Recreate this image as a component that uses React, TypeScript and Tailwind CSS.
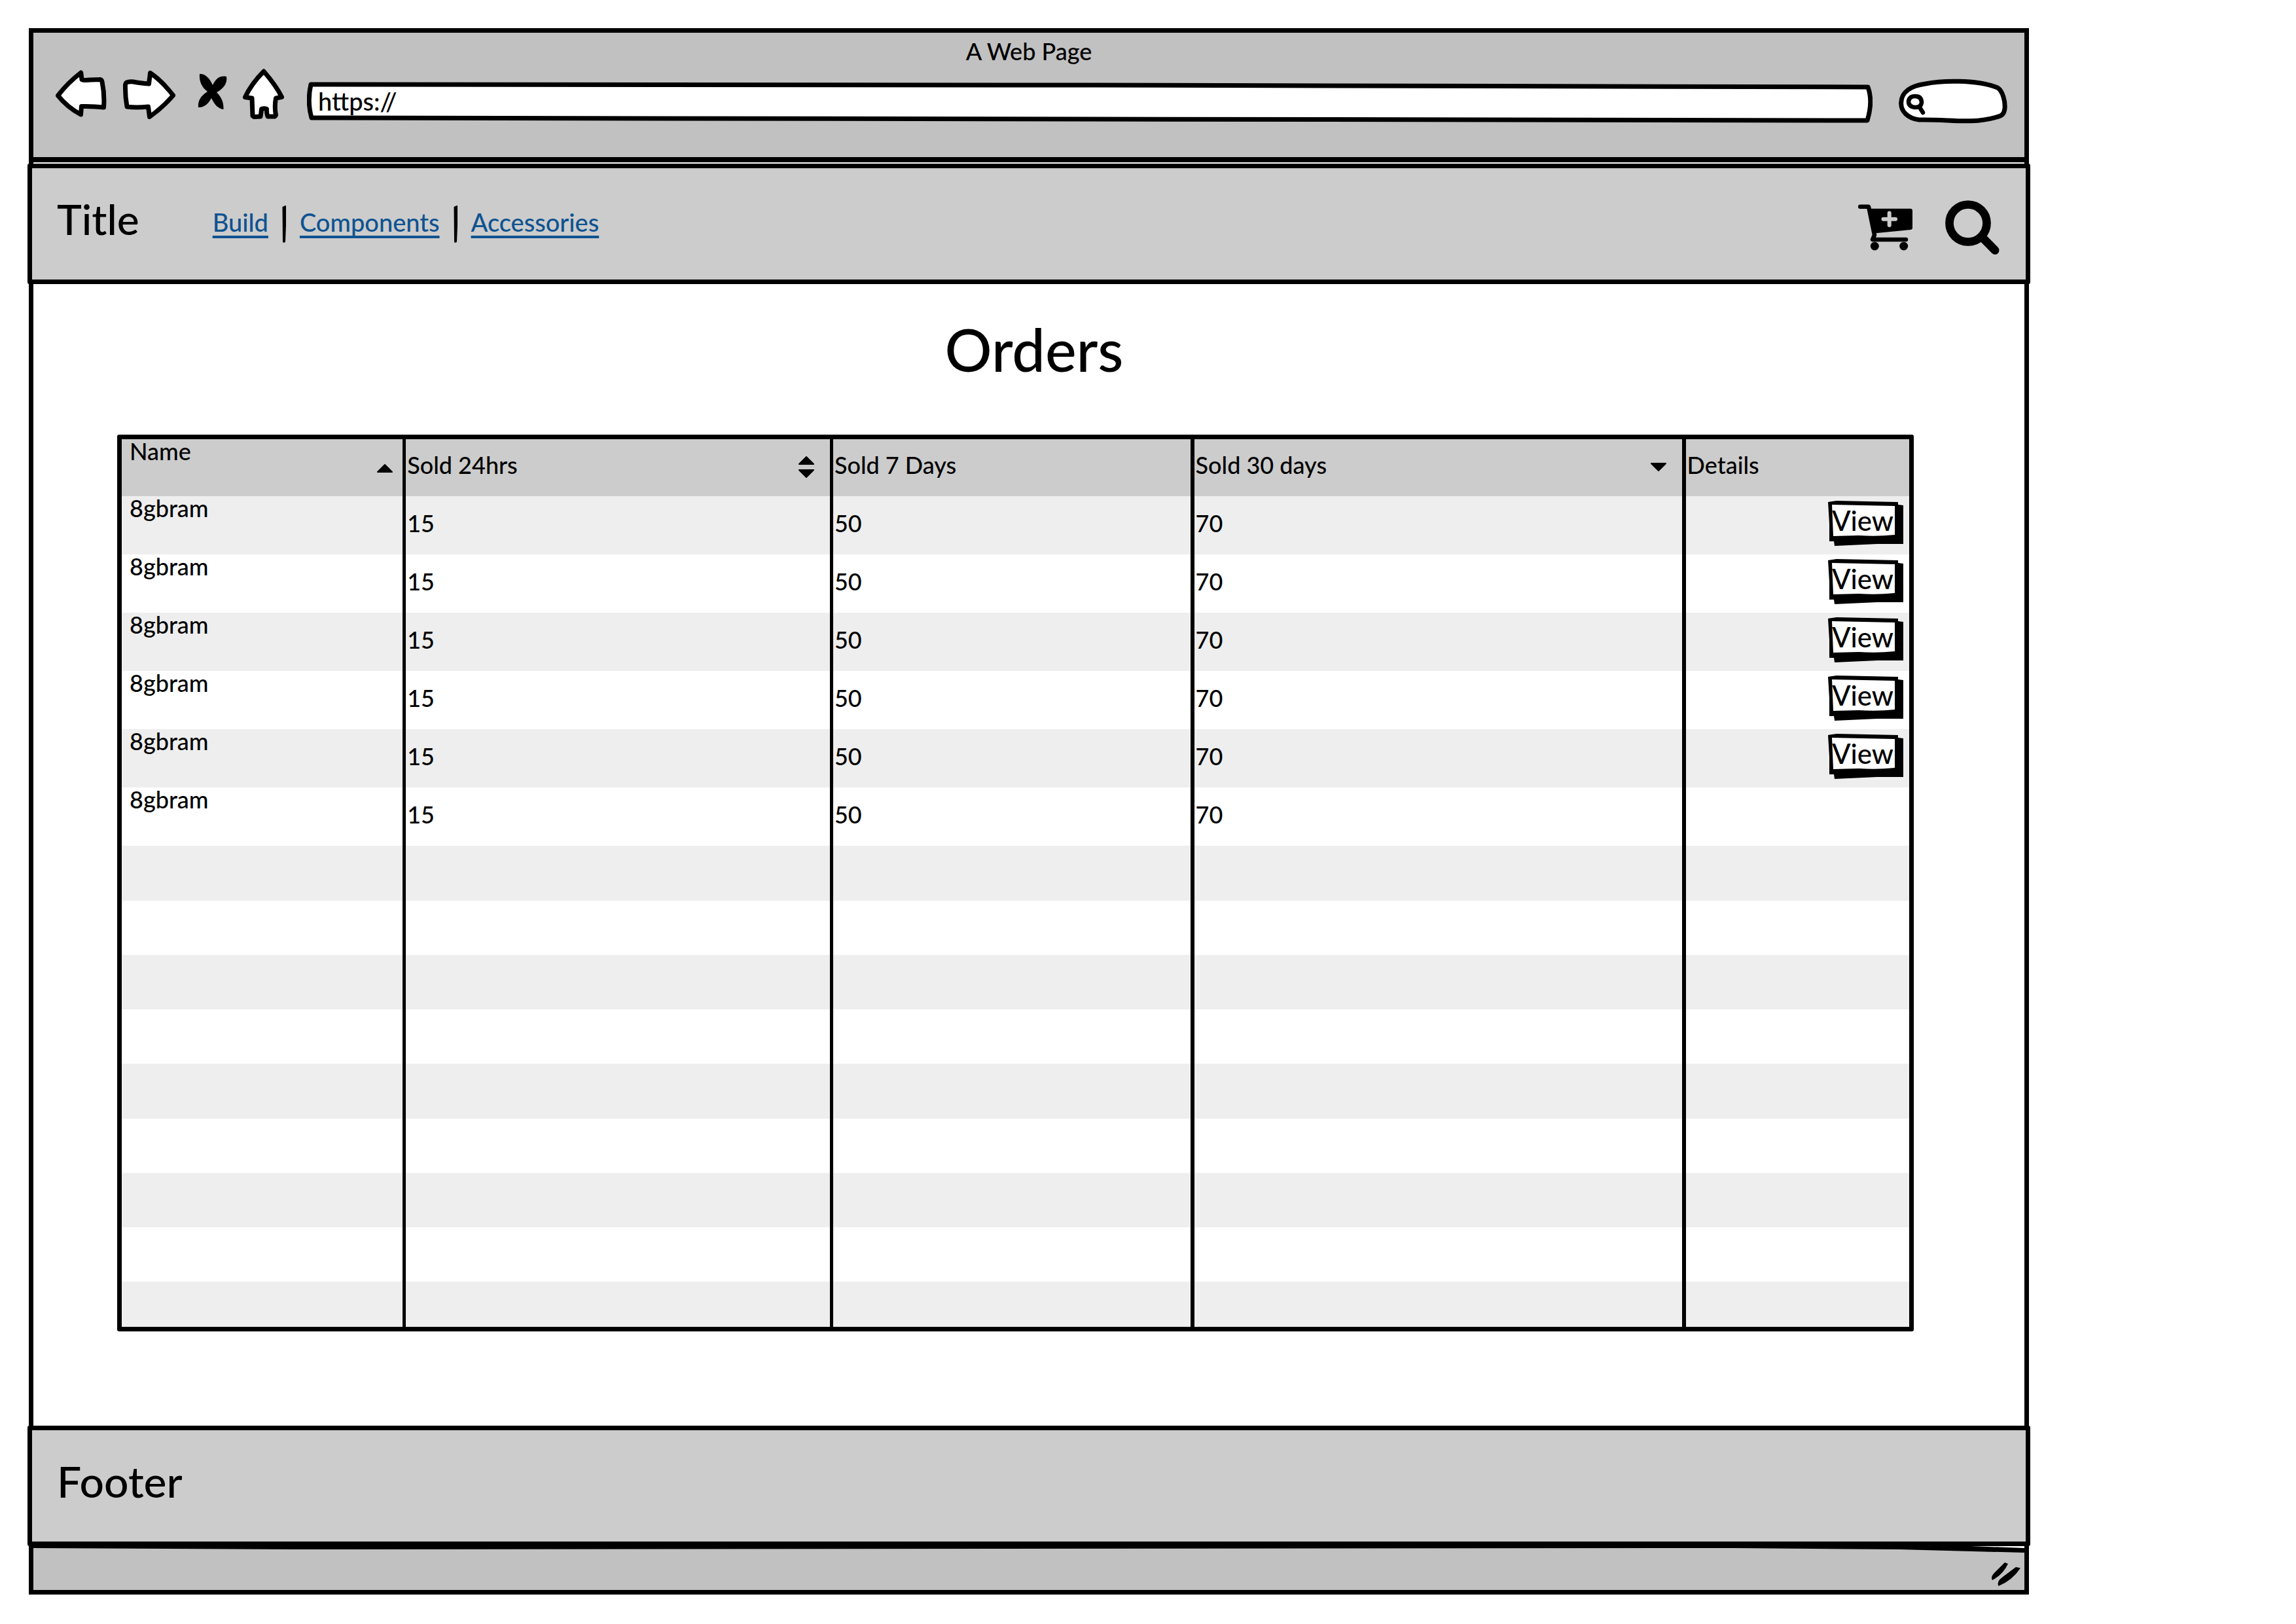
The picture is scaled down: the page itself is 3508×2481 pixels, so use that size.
import React from "react";

type SortKind = "up" | "both" | "down";

const columns: { label: string; style: string; sort?: SortKind }[] = [
  { label: "Name", style: "w-[15.9%] border-r-[5px] border-black", sort: "up" },
  { label: "Sold 24hrs", style: "w-[23.9%] border-r-[5px] border-black", sort: "both" },
  { label: "Sold 7 Days", style: "w-[20.2%] border-r-[6px] border-black" },
  { label: "Sold 30 days", style: "w-[27.5%] border-r-[6px] border-black", sort: "down" },
  { label: "Details", style: "w-[12.5%]" },
];

const orders = [
  { name: "8gbram", day: 15, week: 50, month: 70, view: true },
  { name: "8gbram", day: 15, week: 50, month: 70, view: true },
  { name: "8gbram", day: 15, week: 50, month: 70, view: true },
  { name: "8gbram", day: 15, week: 50, month: 70, view: true },
  { name: "8gbram", day: 15, week: 50, month: 70, view: true },
  { name: "8gbram", day: 15, week: 50, month: 70, view: false },
];

const emptyRows = [
  "h-[84px] bg-[#eeeeee]",
  "h-[83px]",
  "h-[83px] bg-[#eeeeee]",
  "h-[83px]",
  "h-[84px] bg-[#eeeeee]",
  "h-[83px]",
  "h-[83px] bg-[#eeeeee]",
  "h-[83px]",
  "h-[69px] bg-[#eeeeee]",
];

function BrowserButtons() {
  const outline = { fill: "#fff", stroke: "#000", strokeWidth: 7, strokeLinejoin: "round" as const };
  return (
    <>
      <button type="button" aria-label="Back" className="h-[84px] w-[78px] shrink-0">
        <svg viewBox="85 105 78 84" className="h-full w-full" aria-hidden="true">
          <path
            {...outline}
            d="M88.5 146 Q104 126 123.7 111 L125 121.5 Q128 123 138 122 L153 121.5 Q155.500 122 156 125 Q160 144 158.500 164 Q142 162 124.500 162.500 L123.500 175 Q103 164 88.500 146 Z"
          />
        </svg>
      </button>
      <button type="button" aria-label="Forward" className="ml-6 h-[84px] w-[82px] shrink-0">
        <svg viewBox="187 105 82 84" className="h-full w-full" aria-hidden="true">
          <path
            {...outline}
            d="M264.500 145.700 Q247 123 229.500 111.500 L227.500 128 Q214 127 204 125 Q192 124 191.500 129 Q191 147 194 163 Q208 165 226.500 163 L228.500 178.500 Q249 164 264.500 145.700 Z"
          />
        </svg>
      </button>
      <button type="button" aria-label="Stop" className="ml-[33px] h-[84px] w-[46px] shrink-0">
        <svg viewBox="302 105 46 84" className="h-full w-full" aria-hidden="true">
          <path d="M305 113 C312 112 320 118 325 130 C330 119 337 115 346 117 C348 127 341 136 331 141 C338 148 342 156 341.500 167 C333 166 328 160 323 150 C318 159 311 165 303 164 C302 154 307 146 317 140 C308 133 304 124 305 113 Z" />
        </svg>
      </button>
      <button type="button" aria-label="Home" className="ml-[22px] h-[84px] w-[65px] shrink-0">
        <svg viewBox="370 105 65 84" className="h-full w-full" aria-hidden="true">
          <path
            {...outline}
            d="M403 109 Q422 131 430.500 148.300 L421.500 150 Q419 163 421.500 176 L420 178 L409 178 Q407 172 407.500 166.500 Q403.500 165 399.500 166.500 Q399 173 398 178 L388 178.500 L386 177 L385 150 L374.500 148.500 Q384 128 403 109 Z"
          />
        </svg>
      </button>
    </>
  );
}

function AddressBar() {
  return (
    <div className="relative ml-[34px] h-[84px] flex-1">
      <svg
        viewBox="0 0 2392 84"
        preserveAspectRatio="none"
        className="absolute inset-0 h-full w-full"
        aria-hidden="true"
      >
        <path
          d="M6 24 Q600 23 1200 25 T2385 28 Q2393 50 2384 79 Q1800 79 1200 77 T7 75 Q0 50 6 24 Z"
          fill="#fff"
          stroke="#000"
          strokeWidth="7"
          strokeLinejoin="round"
          vectorEffect="non-scaling-stroke"
        />
      </svg>
      <input
        type="text"
        aria-label="Address"
        defaultValue="https://"
        className="relative mt-[27px] block h-11 w-full bg-transparent px-[17px] text-[38px] leading-[44px] outline-none"
      />
    </div>
  );
}

function BrowserSearch() {
  return (
    <div className="relative ml-10 h-[84px] w-[167px] shrink-0">
      <svg viewBox="2901 105 167 84" className="absolute inset-0 h-full w-full" aria-hidden="true">
        <path
          d="M2904.700 157 C2905 140 2920 131 2942 128 C2965 123 3020 121 3052 134 C3060 139 3064 155 3063 166 C3062 174 3059 177 3050 179 C3010 190 2980 182 2932 183 C2915 181 2904 170 2904.700 157 Z"
          fill="#fff"
          stroke="#000"
          strokeWidth="7"
          strokeLinejoin="round"
        />
        <path
          d="M2916 155 Q2917 147 2926 147 Q2936 147 2936 157 Q2935 164 2926 164 Q2916 163 2916 155 Z M2933 164 L2938 172"
          fill="#fff"
          stroke="#000"
          strokeWidth="6.500"
          strokeLinecap="round"
        />
      </svg>
      <input
        type="search"
        aria-label="Web search"
        className="relative mt-[27px] block h-11 w-full bg-transparent pl-11 pr-4 text-[36px] outline-none"
      />
    </div>
  );
}

function SortIcon({ kind }: { kind: SortKind }) {
  const shape = { stroke: "#000", strokeWidth: 2, strokeLinejoin: "round" as const };
  if (kind === "up") {
    return (
      <button type="button" aria-label="Sort by name" className="mr-[15px] mt-[38px] h-[14px] w-6">
        <svg viewBox="0 0 24 14" className="h-full w-full" aria-hidden="true">
          <path d="M12 1 L23 12 H1 Z" {...shape} />
        </svg>
      </button>
    );
  }
  if (kind === "both") {
    return (
      <button type="button" aria-label="Sort by sold in 24 hours" className="mr-6 mt-[26px] h-[34px] w-6">
        <svg viewBox="0 0 24 34" className="h-full w-full" aria-hidden="true">
          <path d="M12 1 L23 12 H1 Z M12 32 L23 21 H1 Z" {...shape} />
        </svg>
      </button>
    );
  }
  return (
    <button type="button" aria-label="Sort by sold in 30 days" className="mr-6 mt-[36px] h-[14px] w-6">
      <svg viewBox="0 0 24 14" className="h-full w-full" aria-hidden="true">
        <path d="M12 12 L23 1 H1 Z" {...shape} />
      </svg>
    </button>
  );
}

function ViewButton() {
  return (
    <button type="button" className="relative block h-[69px] w-[115px] text-left">
      <svg viewBox="0 0 115 69" className="absolute inset-0 h-full w-full" aria-hidden="true">
        <path d="M0 2 L13 0 L60 1 L107 2 V6 L115 7 V66 L75 66 L10 69 L9 62 H2 L2 35 Z" />
        <path d="M6 6 L102 8 V52 Q75 55 47 53 L8 54 Z" fill="#fff" />
      </svg>
      <span className="relative block pb-[14px] pl-[6px] pt-[5px] text-[42px] leading-[50px]">View</span>
    </button>
  );
}

function NavSeparator() {
  return (
    <svg viewBox="0 0 6 57" className="mx-[21px] h-[57px] w-[6px]" aria-hidden="true">
      <path d="M0.500 2 L5 0 H6 V30 L5 55 Q4 58 1 56 Z" />
    </svg>
  );
}

function NavLink({ children }: { children: string }) {
  return (
    <a
      href="#"
      className="text-[38px] leading-[50px] text-[#0e5391] underline decoration-4 underline-offset-[6px] [text-decoration-skip-ink:none]"
    >
      {children}
    </a>
  );
}

function OrdersTable() {
  return (
    <div className="ml-32 mr-[169px] mt-[83px] rounded-[3px] border-[7px] border-black">
      <table className="w-full table-fixed border-separate border-spacing-0 text-[36px] leading-[36px]">
        <thead>
          <tr className="h-[87px] bg-[#cccccc]">
            {columns.map((c, i) => (
              <th key={c.label} scope="col" className={`p-0 text-left align-top font-medium ${c.style}`}>
                <div className="flex items-start justify-between">
                  <span className={i === 0 ? "pl-3" : "pl-[2px] pt-[21px]"}>{c.label}</span>
                  {c.sort && <SortIcon kind={c.sort} />}
                </div>
              </th>
            ))}
          </tr>
        </thead>
        <tbody>
          {orders.map((o, i) => (
            <tr key={i} className={i % 2 === 0 ? "h-[89px] bg-[#eeeeee]" : "h-[89px]"}>
              <td className="border-r-[5px] border-black p-0 pl-3 align-top">{o.name}</td>
              <td className="border-r-[5px] border-black p-0 pl-[2px] pt-[23px] align-top">{o.day}</td>
              <td className="border-r-[6px] border-black p-0 pl-[2px] pt-[23px] align-top">{o.week}</td>
              <td className="border-r-[6px] border-black p-0 pl-[2px] pt-[23px] align-top">{o.month}</td>
              <td className="p-0 align-top">
                {o.view && (
                  <div className="flex justify-end pr-[9px] pt-[7px]">
                    <ViewButton />
                  </div>
                )}
              </td>
            </tr>
          ))}
          {emptyRows.map((row, i) => (
            <tr key={i} className={row}>
              <td className="border-r-[5px] border-black p-0" />
              <td className="border-r-[5px] border-black p-0" />
              <td className="border-r-[6px] border-black p-0" />
              <td className="border-r-[6px] border-black p-0" />
              <td className="p-0" />
            </tr>
          ))}
        </tbody>
      </table>
    </div>
  );
}

export default function App() {
  return (
    <div className="bg-white pb-11 pl-11 pr-[408px] pt-[43px] font-['Lato','Open_Sans',sans-serif] font-medium text-black">
      <div className="border-x-[7px] border-t-[7px] border-black">
        <div className="border-b-8 border-black bg-[#c1c1c1] pt-2">
          <p className="text-center text-[36px] leading-10">A Web Page</p>
          <div className="mt-[7px] flex items-start pb-[51px] pl-[34px] pr-[25px]">
            <BrowserButtons />
            <AddressBar />
            <BrowserSearch />
          </div>
        </div>

        <header className="-mx-[9px] mt-[2px] flex h-[184px] items-start rounded-[3px] border-[7px] border-black bg-[#cccccc] pl-[38px] pr-10">
          <p className="pt-[38px] text-[64px] leading-[80px]">Title</p>
          <nav aria-label="Main" className="ml-[112px] flex items-start pt-[57px]">
            <NavLink>Build</NavLink>
            <NavSeparator />
            <NavLink>Components</NavLink>
            <NavSeparator />
            <NavLink>Accessories</NavLink>
          </nav>
          <div className="ml-auto flex pt-[48px]">
            <button type="button" aria-label="Add to cart" className="h-[86px] w-[84px]">
              <svg viewBox="2838 305 84 86" className="h-full w-full" aria-hidden="true">
                <path
                  d="M2841 315.700 H2854 L2863 359 L2860 366 H2911"
                  fill="none"
                  stroke="#000"
                  strokeWidth="6.500"
                  strokeLinecap="round"
                  strokeLinejoin="round"
                />
                <path d="M2853 318.700 H2918 Q2921 319 2921 322 V348 Q2921 350.500 2918 351 L2862 356.500 Z" />
                <circle cx="2863.300" cy="376" r="6.500" />
                <circle cx="2907.700" cy="376" r="6.500" />
                <path
                  d="M2885.700 325.500 V344 M2876.500 334.700 H2895"
                  stroke="#cccccc"
                  strokeWidth="6"
                  strokeLinecap="round"
                />
              </svg>
            </button>
            <button type="button" aria-label="Search" className="ml-12 h-[86px] w-[84px]">
              <svg viewBox="2970 305 84 86" className="h-full w-full" aria-hidden="true">
                <circle cx="3006" cy="341" r="28.500" fill="none" stroke="#000" strokeWidth="12.700" />
                <path d="M3028 363 L3047 382.300" stroke="#000" strokeWidth="13" strokeLinecap="round" />
              </svg>
            </button>
          </div>
        </header>

        <main className="pb-36 pt-[51px]">
          <h1 className="pl-4 text-center text-[90px] leading-[96px]">Orders</h1>
          <OrdersTable />
        </main>

        <footer className="-mx-[9px] h-[184px] rounded-[3px] border-[7px] border-black bg-[#cccccc] pl-[38px] pt-[38px]">
          <p className="text-[66px] leading-[80px]">Footer</p>
        </footer>

        <div className="relative flex h-[74px] items-start justify-end border-b-[7px] border-black bg-[#c1c1c1] pr-[6px] pt-6">
          <svg
            viewBox="0 0 3042 12"
            preserveAspectRatio="none"
            className="absolute inset-x-0 top-0 h-3 w-full"
            aria-hidden="true"
          >
            <path d="M0 0 H3042 V10 L2850 5 L2600 3 L400 5 L0 3 Z" />
            <path d="M2960 0 H3042 V3 Z" fill="#fff" />
          </svg>
          <svg viewBox="3043 2385 44 38" className="h-[38px] w-11" aria-hidden="true">
            <path d="M3063 2386 L3068 2388 Q3060 2405 3044 2413 Q3041 2408 3047 2402 Z" />
            <path d="M3080 2393 L3087 2394.500 Q3075 2413 3053.500 2422 Q3050 2415 3060 2408 Z" />
          </svg>
        </div>
      </div>
    </div>
  );
}
